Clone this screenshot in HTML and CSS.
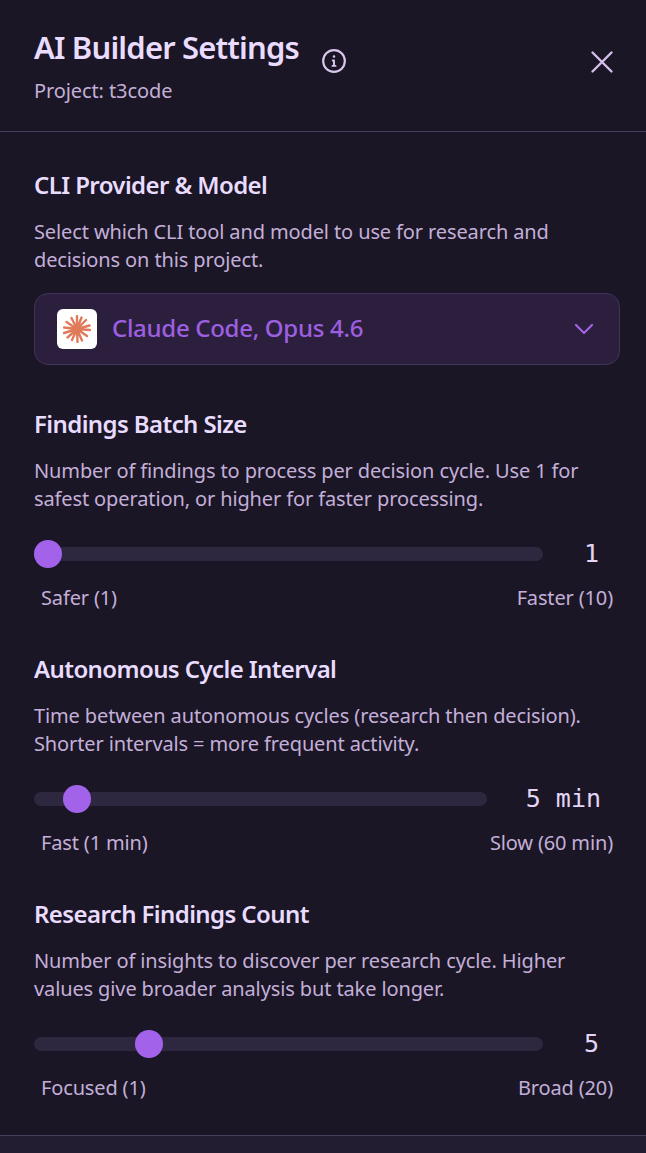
FILE: index.html
```html
<!DOCTYPE html>
<html lang="en">

<head>
    <meta charset="UTF-8" />
    <meta name="viewport" content="width=device-width, initial-scale=1.0" />
    <title>AI Builder Settings</title>
    <link rel="stylesheet" href="styles.css">
</head>

<body>
    <div class="panel">
        <header class="panel-header">
            <div class="header-text">
                <div class="title-row">
                    <h1>AI Builder Settings</h1>
                    <svg class="info-icon" viewBox="0 0 24 24" width="26" height="26" fill="none" stroke="currentColor" stroke-width="2" stroke-linecap="round">
                        <circle cx="12" cy="12" r="10" />
                        <path d="M12 16.5v-5M10.8 11.5H12M10.6 16.5h2.8" stroke-width="1.8" />
                        <circle cx="12" cy="7.8" r="0.6" fill="currentColor" stroke-width="1.2" />
                    </svg>
                </div>
                <div class="project">Project: t3code</div>
            </div>
            <svg class="close-icon" viewBox="0 0 24 24" width="24" height="24" fill="none" stroke="currentColor" stroke-width="2.4" stroke-linecap="round">
                <path d="M2.5 2.5l19 19M21.5 2.5l-19 19" />
            </svg>
        </header>

        <main class="panel-body">
            <section class="setting">
                <h2>CLI Provider &amp; Model</h2>
                <p>Select which CLI tool and model to use for research and decisions on this project.</p>
                <div class="provider-select">
                    <span class="provider-logo">
                        <svg viewBox="0 0 28 28" width="28" height="28" fill="none" stroke="#e07a5a" stroke-width="2.4" stroke-linecap="round">
                            <path d="M14 14L14 1M14 14L18.5 2.5M14 14L23 5M14 14L26.5 10.5M14 14L27 15M14 14L24 21M14 14L19 25.5M14 14L14.5 27M14 14L9 25M14 14L4.5 22.5M14 14L1 18M14 14L1 12.5M14 14L3.5 7M14 14L8.5 3" />
                        </svg>
                    </span>
                    <span class="provider-name">Claude Code, Opus 4.6</span>
                    <svg class="chevron" viewBox="0 0 20 12" width="20" height="12" fill="none" stroke="currentColor" stroke-width="2.2" stroke-linecap="round" stroke-linejoin="round">
                        <path d="M2 2l8 8 8-8" />
                    </svg>
                </div>
            </section>

            <section class="setting">
                <h2>Findings Batch Size</h2>
                <p>Number of findings to process per decision cycle. Use 1 for safest operation, or higher for faster processing.</p>
                <div class="slider-row">
                    <input type="range" min="1" max="10" value="1" />
                    <span class="slider-value">1</span>
                </div>
                <div class="slider-labels">
                    <span>Safer (1)</span>
                    <span>Faster (10)</span>
                </div>
            </section>

            <section class="setting">
                <h2>Autonomous Cycle Interval</h2>
                <p>Time between autonomous cycles (research then decision). Shorter intervals = more frequent activity.</p>
                <div class="slider-row">
                    <input type="range" min="1" max="60" value="5" />
                    <span class="slider-value">5 min</span>
                </div>
                <div class="slider-labels">
                    <span>Fast (1 min)</span>
                    <span>Slow (60 min)</span>
                </div>
            </section>

            <section class="setting">
                <h2>Research Findings Count</h2>
                <p>Number of insights to discover per research cycle. Higher values give broader analysis but take longer.</p>
                <div class="slider-row">
                    <input type="range" min="1" max="20" value="5" />
                    <span class="slider-value">5</span>
                </div>
                <div class="slider-labels">
                    <span>Focused (1)</span>
                    <span>Broad (20)</span>
                </div>
            </section>
        </main>

        <footer class="panel-footer"></footer>
    </div>
</body>

</html>
```

FILE: styles.css
```css
* {
    box-sizing: border-box;
}

html,
body {
    height: 100%;
}

body {
    margin: 0;
    background-color: #1a1625;
    color: #e9dcff;
    font-family: "Noto Sans", "Open Sans", sans-serif;
    overflow: hidden;
}

.panel {
    display: flex;
    flex-direction: column;
    height: 1153px;
}

.panel-header {
    flex-shrink: 0;
    display: flex;
    justify-content: space-between;
    align-items: flex-start;
    height: 132px;
    padding: 27px 32px 0 34px;
    border-bottom: 1px solid #453d5c;
}

.title-row {
    display: flex;
    align-items: flex-start;
}

h1 {
    margin: 0;
    font-size: 31px;
    line-height: 40px;
    font-weight: 600;
    letter-spacing: -0.83px;
    color: #e9dcff;
}

.info-icon {
    margin: 21px 0 0 22px;
    color: #d8c6ec;
}

.project {
    margin-top: 3px;
    font-size: 20px;
    line-height: 28px;
    letter-spacing: -0.1px;
    color: #c4afd9;
}

.close-icon {
    margin-top: 23px;
    color: #d4bfea;
}

.panel-body {
    flex: 1;
    min-height: 0;
    padding: 36px 26px 0 34px;
}

.setting {
    margin-bottom: 40px;
}

h2 {
    margin: 0;
    font-size: 24px;
    line-height: 34px;
    font-weight: 600;
    letter-spacing: -0.6px;
    color: #e9dcff;
}

.setting p {
    margin: 16px 0 0;
    font-size: 20px;
    line-height: 28px;
    letter-spacing: -0.12px;
    color: #c4afd9;
}

.provider-select {
    display: flex;
    align-items: center;
    height: 72px;
    margin: 19px 0 42px;
    padding: 0 25px 0 22px;
    background-color: #2b1f3d;
    border: 1px solid #41345a;
    border-radius: 14px;
}

.provider-logo {
    display: flex;
    align-items: center;
    justify-content: center;
    width: 40px;
    height: 40px;
    background-color: #fff;
    border-radius: 6px;
}

.provider-name {
    flex: 1;
    margin-left: 15px;
    padding-bottom: 3px;
    font-size: 24px;
    font-weight: 500;
    letter-spacing: -0.3px;
    color: #9d5fe0;
}

.chevron {
    color: #a463e6;
}

.slider-row {
    display: flex;
    align-items: center;
    gap: 20px;
    margin-top: 27px;
}

.slider-row input {
    flex: 1;
    min-width: 0;
    height: 28px;
    margin: 0;
    background: transparent;
    appearance: none;
    -webkit-appearance: none;
}

.slider-row input::-webkit-slider-runnable-track {
    height: 14px;
    background-color: #2d2840;
    border-radius: 7px;
}

.slider-row input::-webkit-slider-thumb {
    -webkit-appearance: none;
    width: 28px;
    height: 28px;
    margin-top: -7px;
    background-color: #a263ea;
    border-radius: 50%;
}

.slider-value {
    min-width: 57px;
    padding: 0 19px;
    font-family: "DejaVu Sans Mono", monospace;
    font-size: 25px;
    line-height: 28px;
    text-align: center;
    color: #e4d5f7;
}

.slider-labels {
    display: flex;
    justify-content: space-between;
    margin-top: 16px;
    padding: 0 7px;
    font-size: 20px;
    line-height: 28px;
    letter-spacing: -0.15px;
    color: #c4afd9;
}

.panel-footer {
    flex-shrink: 0;
    height: 18px;
    background-color: #221d30;
    border-top: 1px solid #453d5c;
}
```
